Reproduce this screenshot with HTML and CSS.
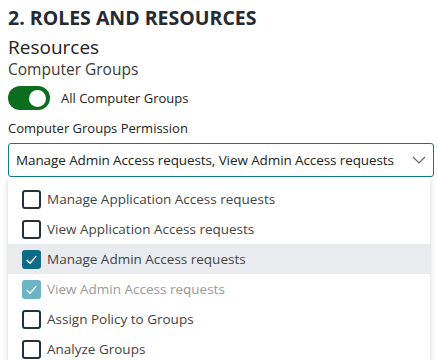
FILE: index.html
```html
<!DOCTYPE html>
<html lang="en">
<head>
  <meta charset="UTF-8">
  <title>Roles and Resources</title>
  <link rel="stylesheet" href="styles.css">
</head>
<body>
  <h1>2. ROLES AND RESOURCES</h1>
  <h2>Resources</h2>
  <h3>Computer Groups</h3>

  <label class="toggle-row">
    <span class="toggle on"><span class="knob"></span></span>
    <span>All Computer Groups</span>
  </label>

  <div class="field-label">Computer Groups Permission</div>

  <div class="select">
    <span class="select-value">Manage Admin Access requests, View Admin Access requests</span>
    <svg class="chevron" width="14" height="8" viewBox="0 0 14 8">
      <path d="M1 1 L7 7 L13 1" fill="none" stroke="#666" stroke-width="1.2"/>
    </svg>
  </div>

  <ul class="options">
    <li class="option"><span class="box"></span>Manage Application Access requests</li>
    <li class="option"><span class="box"></span>View Application Access requests</li>
    <li class="option active"><span class="box checked"><svg viewBox="0 0 20 20"><path d="M5 10.5 L8.5 14 L15 6.5" fill="none" stroke="#fff" stroke-width="1.4"/></svg></span>Manage Admin Access requests</li>
    <li class="option disabled"><span class="box checked"><svg viewBox="0 0 20 20"><path d="M5 10.5 L8.5 14 L15 6.5" fill="none" stroke="#fff" stroke-width="1.4"/></svg></span>View Admin Access requests</li>
    <li class="option"><span class="box"></span>Assign Policy to Groups</li>
    <li class="option"><span class="box"></span>Analyze Groups</li>
  </ul>
</body>
</html>
```

FILE: styles.css
```css
body {
  margin: 0;
  padding: 6px 4px 0 8px;
  font-family: "Open Sans", "Noto Sans", sans-serif;
  color: #222;
  background: #fff;
  overflow: hidden;
}

h1 {
  font-size: 19.5px;
  font-weight: 700;
  color: #242a33;
  margin: 0 0 6px;
  line-height: 24px;
}

h2 {
  font-size: 19px;
  font-weight: 400;
  margin: 0;
  line-height: 22px;
}

h3 {
  font-size: 15.5px;
  font-weight: 400;
  color: #3a3a3a;
  margin: 0;
  line-height: 22px;
}

.toggle-row {
  display: flex;
  align-items: center;
  gap: 11px;
  margin-top: 6px;
  font-size: 13px;
  height: 24px;
}

.toggle {
  width: 42px;
  height: 24px;
  border-radius: 12px;
  background: #0b6e1f;
  display: flex;
  align-items: center;
  justify-content: flex-end;
  padding: 0 4px;
  box-sizing: border-box;
}

.knob {
  width: 17px;
  height: 17px;
  border-radius: 50%;
  background: #fff;
}

.field-label {
  font-size: 13px;
  margin-top: 8px;
  line-height: 20px;
}

.select {
  margin-top: 5px;
  height: 34px;
  border: 1px solid #12788a;
  border-radius: 3px;
  box-sizing: border-box;
  display: flex;
  align-items: center;
  justify-content: space-between;
  padding: 0 7px 0 7px;
  font-size: 13.5px;
  letter-spacing: -0.1px;
  color: #222;
}

.options {
  list-style: none;
  margin: 1px 4px 0 0;
  padding: 6px 0 0;
  box-shadow: 0 2px 6px rgba(0,0,0,0.18);
}

.option {
  display: flex;
  align-items: center;
  height: 30px;
  padding-left: 14px;
  font-size: 13.5px;
  color: #444;
}

.option.active {
  background: #e9ebee;
}

.option.disabled {
  color: #9a9a9a;
}

.box {
  width: 19px;
  height: 19px;
  border: 2px solid #25303e;
  border-radius: 3px;
  box-sizing: border-box;
  margin-right: 6px;
  flex-shrink: 0;
}

.box.checked {
  background: #0e6a85;
  border-color: #0e6a85;
}

.disabled .box.checked {
  background: #6cb4c4;
  border-color: #6cb4c4;
}

.box svg {
  display: block;
  margin: -2px;
  width: 19px;
  height: 19px;
}
```
